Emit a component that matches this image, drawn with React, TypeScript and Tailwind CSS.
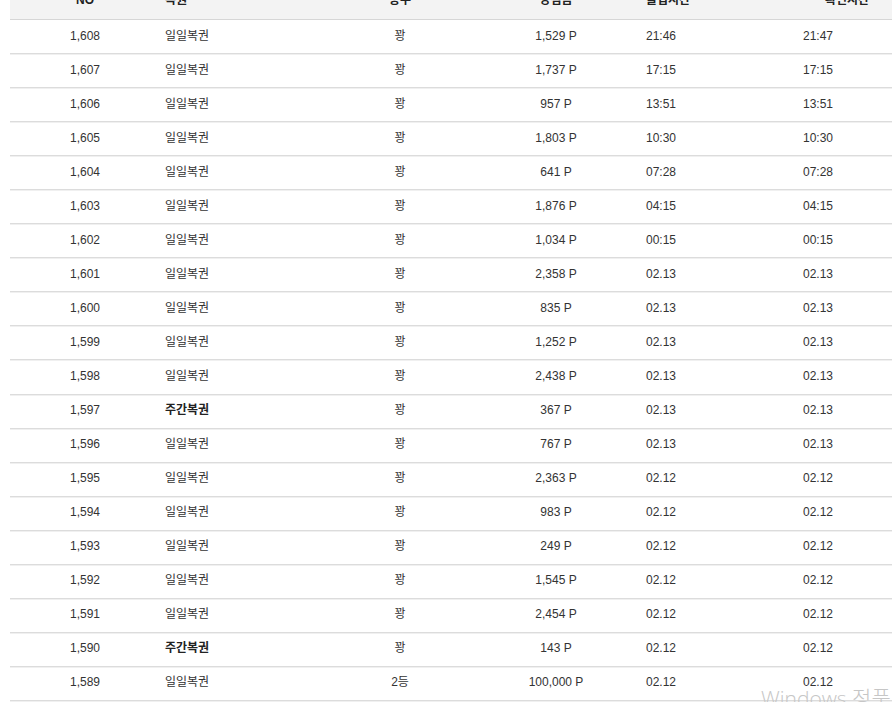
import React from "react";

type Row = {
  no: string;
  name: string;
  rank: string;
  prize: string;
  inTime: string;
  checkTime: string;
};

const rows: Row[] = [
  { no: "1,608", name: "일일복권", rank: "꽝", prize: "1,529 P", inTime: "21:46", checkTime: "21:47" },
  { no: "1,607", name: "일일복권", rank: "꽝", prize: "1,737 P", inTime: "17:15", checkTime: "17:15" },
  { no: "1,606", name: "일일복권", rank: "꽝", prize: "957 P", inTime: "13:51", checkTime: "13:51" },
  { no: "1,605", name: "일일복권", rank: "꽝", prize: "1,803 P", inTime: "10:30", checkTime: "10:30" },
  { no: "1,604", name: "일일복권", rank: "꽝", prize: "641 P", inTime: "07:28", checkTime: "07:28" },
  { no: "1,603", name: "일일복권", rank: "꽝", prize: "1,876 P", inTime: "04:15", checkTime: "04:15" },
  { no: "1,602", name: "일일복권", rank: "꽝", prize: "1,034 P", inTime: "00:15", checkTime: "00:15" },
  { no: "1,601", name: "일일복권", rank: "꽝", prize: "2,358 P", inTime: "02.13", checkTime: "02.13" },
  { no: "1,600", name: "일일복권", rank: "꽝", prize: "835 P", inTime: "02.13", checkTime: "02.13" },
  { no: "1,599", name: "일일복권", rank: "꽝", prize: "1,252 P", inTime: "02.13", checkTime: "02.13" },
  { no: "1,598", name: "일일복권", rank: "꽝", prize: "2,438 P", inTime: "02.13", checkTime: "02.13" },
  { no: "1,597", name: "주간복권", rank: "꽝", prize: "367 P", inTime: "02.13", checkTime: "02.13" },
  { no: "1,596", name: "일일복권", rank: "꽝", prize: "767 P", inTime: "02.13", checkTime: "02.13" },
  { no: "1,595", name: "일일복권", rank: "꽝", prize: "2,363 P", inTime: "02.12", checkTime: "02.12" },
  { no: "1,594", name: "일일복권", rank: "꽝", prize: "983 P", inTime: "02.12", checkTime: "02.12" },
  { no: "1,593", name: "일일복권", rank: "꽝", prize: "249 P", inTime: "02.12", checkTime: "02.12" },
  { no: "1,592", name: "일일복권", rank: "꽝", prize: "1,545 P", inTime: "02.12", checkTime: "02.12" },
  { no: "1,591", name: "일일복권", rank: "꽝", prize: "2,454 P", inTime: "02.12", checkTime: "02.12" },
  { no: "1,590", name: "주간복권", rank: "꽝", prize: "143 P", inTime: "02.12", checkTime: "02.12" },
  { no: "1,589", name: "일일복권", rank: "2등", prize: "100,000 P", inTime: "02.12", checkTime: "02.12" },
];

const cols = "grid grid-cols-[150px_170px_140px_172px_157px_1fr] items-center";

export default function App() {
  return (
    <div
      className="relative h-[702px] w-[892px] overflow-hidden bg-white text-[12px] text-[#333]"
      style={{ fontFamily: '"Liberation Sans", "Noto Sans CJK KR", sans-serif' }}
    >
      <div className="ml-[10px] -mt-[19px]">
        <div className={`${cols} h-[39px] border-b border-[#d6d6d6] bg-[#f3f3f3] font-bold text-[#222]`}>
          <div className="text-center">NO</div>
          <div className="pl-[5px]">복권</div>
          <div className="text-center">등수</div>
          <div className="text-center">당첨금</div>
          <div className="pl-[4px]">출입시간</div>
          <div className="pl-[26px]">확인시간</div>
        </div>
        {rows.map((r) => (
          <div
            key={r.no}
            className={`${cols} h-[34.06px] border-b border-[#dcdcdc] pb-[2px] shadow-[0_1px_0_#f0f0f0]`}
          >
            <div className="text-center">{r.no}</div>
            <div className={r.name === "주간복권" ? "pl-[5px] font-bold text-[#222]" : "pl-[5px]"}>
              {r.name}
            </div>
            <div className="text-center">{r.rank}</div>
            <div className="text-center">{r.prize}</div>
            <div className="pl-[4px]">{r.inTime}</div>
            <div className="pl-[4px]">{r.checkTime}</div>
          </div>
        ))}
      </div>
      <div
        className="pointer-events-none absolute left-[761px] top-[688px] whitespace-nowrap text-[21px] leading-none font-light text-[#c6c6c6]"
        style={{ fontFamily: '"Open Sans", "Noto Sans CJK KR", sans-serif' }}
      >
        Windows 정품 인증
      </div>
    </div>
  );
}
